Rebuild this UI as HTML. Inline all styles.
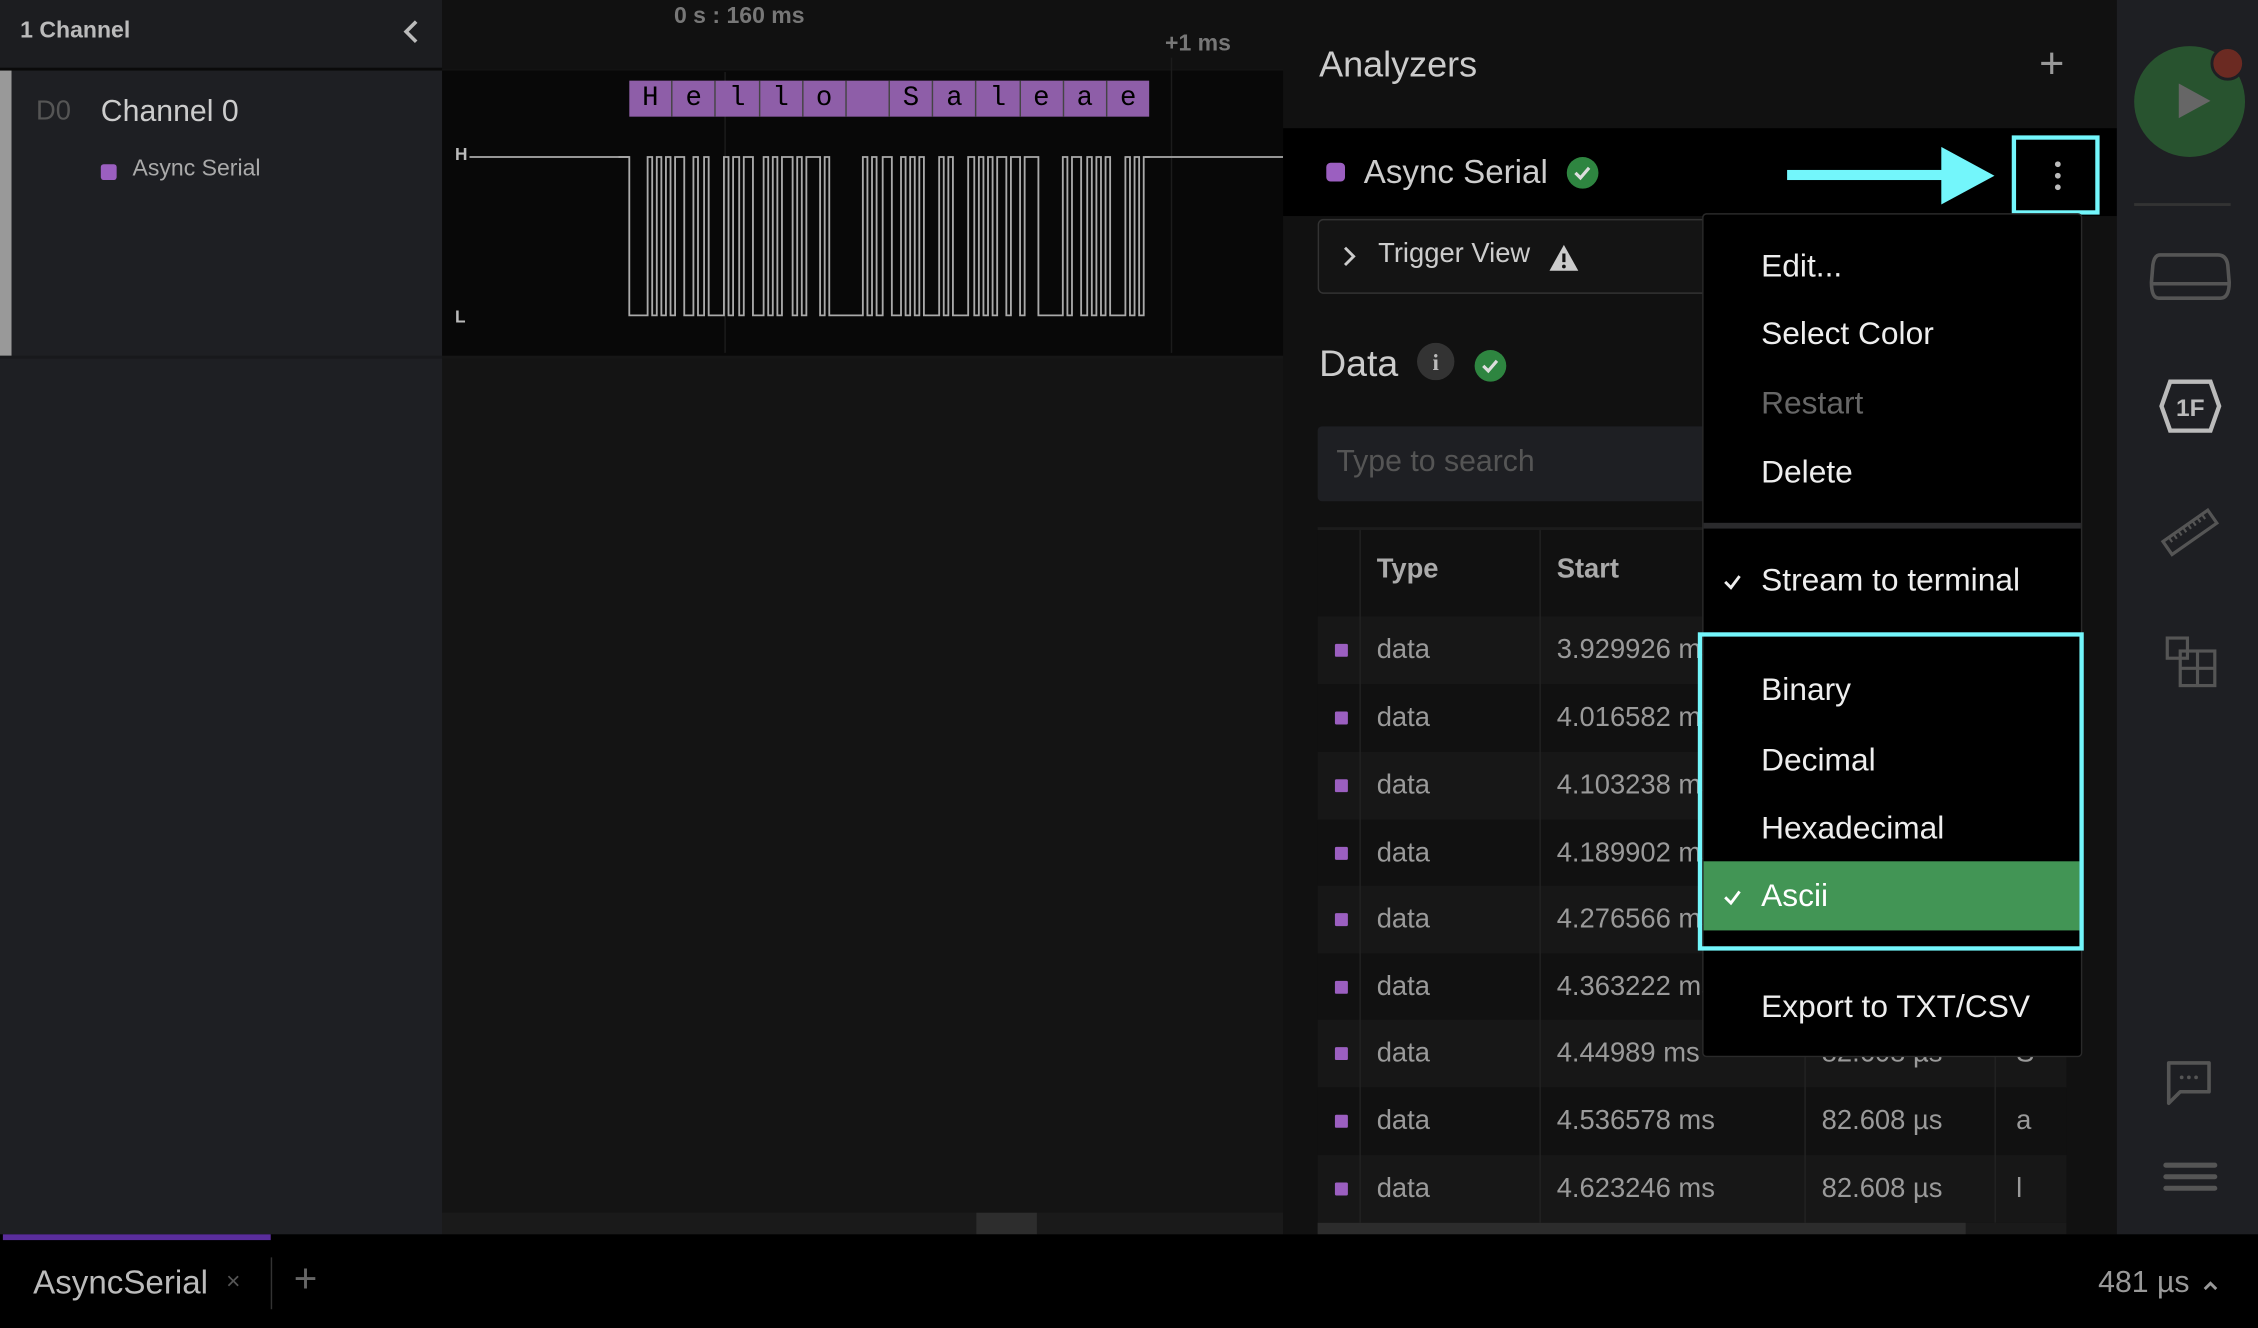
<!DOCTYPE html>
<html><head><meta charset="utf-8">
<style>
*{margin:0;padding:0;box-sizing:border-box}
html,body{width:2258px;height:1328px;overflow:hidden;background:#000}
body{font-family:"Liberation Sans",sans-serif}
#r{position:absolute;left:0;top:0;width:1568px;height:922px;transform:scale(1.44005,1.4403);transform-origin:0 0;background:#141414;overflow:hidden}
.a{position:absolute}
.t{position:absolute;white-space:nowrap}
.row{position:absolute;left:915px;width:520px;height:47px}
.row .m{position:absolute;left:12px;top:19px;width:9px;height:9px;background:#9b5fc0;border-radius:1px}
.row .c{position:absolute;top:13px;font-size:19px;color:#9a9a9a}
.vl{position:absolute;width:1px;background:#222}
.mi{position:absolute;left:1223px;font-size:22px;color:#eee}
</style></head><body><div id="r">
<div class="a" style="left:0;top:0;width:307px;height:48px;background:#1c1d20"></div>
<div class="t" style="left:14px;top:13px;font-size:16px;color:#bbb;font-weight:bold">1 Channel</div>
<svg class="a" style="left:276px;top:12px" width="18" height="20"><path d="M13 3 L6 10 L13 17" stroke="#bbb" stroke-width="2.5" fill="none"/></svg>
<div class="a" style="left:0;top:47px;width:307px;height:2px;background:#0a0a0a"></div>
<div class="a" style="left:0;top:49px;width:307px;height:808px;background:#1e1f23"></div>
<div class="a" style="left:0;top:49px;width:8px;height:198px;background:#999"></div>
<div class="a" style="left:0;top:247px;width:307px;height:2px;background:#18191c"></div>
<div class="t" style="left:25px;top:67px;font-size:19px;color:#555">D0</div>
<div class="t" style="left:70px;top:66px;font-size:21px;color:#ccc">Channel 0</div>
<div class="a" style="left:70px;top:114px;width:11px;height:11px;background:#9b5fc0;border-radius:2px"></div>
<div class="t" style="left:92px;top:109px;font-size:16px;color:#aaa">Async Serial</div>
<div class="a" style="left:307px;top:0;width:584px;height:48px;background:#111"></div>
<div class="t" style="left:468px;top:3px;font-size:16px;color:#777;font-weight:bold">0 s : 160 ms</div>
<div class="t" style="left:809px;top:22px;font-size:16px;color:#777;font-weight:bold">+1 ms</div>
<div class="a" style="left:307px;top:49px;width:584px;height:198px;background:#080808"></div>
<div class="a" style="left:503px;top:50px;width:1px;height:195px;background:#1c1c1c"></div>
<div class="a" style="left:813px;top:40px;width:1px;height:205px;background:#1c1c1c"></div>
<div class="a" style="left:307px;top:247px;width:584px;height:2px;background:#161616"></div>
<div class="a" style="left:437px;top:56px;width:361px;height:25px;background:#8e5ea8;display:flex">
<span style="flex:1;border-right:1px solid #444;text-align:center;font-family:'Liberation Mono',monospace;font-size:19px;line-height:25px;color:#000">H</span><span style="flex:1;border-right:1px solid #444;text-align:center;font-family:'Liberation Mono';font-size:19px;line-height:25px;color:#000">e</span><span style="flex:1;border-right:1px solid #444;text-align:center;font-family:'Liberation Mono';font-size:19px;line-height:25px;color:#000">l</span><span style="flex:1;border-right:1px solid #444;text-align:center;font-family:'Liberation Mono';font-size:19px;line-height:25px;color:#000">l</span><span style="flex:1;border-right:1px solid #444;text-align:center;font-family:'Liberation Mono';font-size:19px;line-height:25px;color:#000">o</span><span style="flex:1;border-right:1px solid #444"></span><span style="flex:1;border-right:1px solid #444;text-align:center;font-family:'Liberation Mono';font-size:19px;line-height:25px;color:#000">S</span><span style="flex:1;border-right:1px solid #444;text-align:center;font-family:'Liberation Mono';font-size:19px;line-height:25px;color:#000">a</span><span style="flex:1;border-right:1px solid #444;text-align:center;font-family:'Liberation Mono';font-size:19px;line-height:25px;color:#000">l</span><span style="flex:1;border-right:1px solid #444;text-align:center;font-family:'Liberation Mono';font-size:19px;line-height:25px;color:#000">e</span><span style="flex:1;border-right:1px solid #444;text-align:center;font-family:'Liberation Mono';font-size:19px;line-height:25px;color:#000">a</span><span style="flex:1;text-align:center;font-family:'Liberation Mono';font-size:19px;line-height:25px;color:#000">e</span></div>
<div class="t" style="left:316px;top:100px;font-size:12px;color:#bbb;font-weight:bold">H</div>
<div class="t" style="left:316px;top:213px;font-size:12px;color:#bbb;font-weight:bold">L</div>
<svg class="a" style="left:0;top:0" width="891" height="247"><path d="M326 109 H437 M795 109 H891" stroke="#aaa" stroke-width="1.2"/><path transform="translate(437,0) scale(1.06,1) translate(-437,0)" d="M430 109 H437 V219 h12 V109 h3 V219 h3 V109 h3 V219 h3 V109 h3 V219 h3 V109 h6 V219 h6 V109 h3 V219 h4 V109 h3 V219 h10 V109 h3 V219 h3 V109 h4 V219 h3 V109 h6 V219 h7 V109 h3 V219 h3 V109 h3 V219 h3 V109 h7 V219 h3 V109 h3 V219 h3 V109 h9 V219 h3 V109 h3 V219 h22 V109 h3 V219 h3 V109 h3 V219 h4 V109 h6 V219 h6 V109 h3 V219 h3 V109 h3 V219 h3 V109 h3 V219 h10 V109 h3 V219 h3 V109 h3 V219 h10 V109 h4 V219 h3 V109 h3 V219 h3 V109 h3 V219 h3 V109 h6 V219 h3 V109 h6 V219 h3 V109 h9 V219 h16 V109 h3 V219 h3 V109 h6 V219 h4 V109 h3 V219 h3 V109 h3 V219 h3 V109 h3 V219 h10 V109 h3 V219 h3 V109 h3 V219 h3 V109 h4" stroke="#aaa" stroke-width="1.2" fill="none"/></svg>
<div class="a" style="left:307px;top:842px;width:584px;height:15px;background:#1a1a1a"></div>
<div class="a" style="left:678px;top:842px;width:42px;height:15px;background:#2d2d2d"></div>
<div class="a" style="left:891px;top:0;width:579px;height:857px;background:#111"></div>
<div class="t" style="left:916px;top:31px;font-size:25px;color:#ccc">Analyzers</div>
<div class="t" style="left:1416px;top:28px;font-size:30px;color:#999;font-weight:300">+</div>
<div class="a" style="left:891px;top:89px;width:579px;height:61px;background:#000"></div>
<div class="a" style="left:921px;top:113px;width:13px;height:13px;background:#9b5fc0;border-radius:3px"></div>
<div class="t" style="left:947px;top:106px;font-size:23px;color:#ccc">Async Serial</div>
<svg class="a" style="left:1087px;top:108px" width="24" height="24"><circle cx="12" cy="12" r="11" fill="#2e8540"/><path d="M7 12 L10.5 15.5 L16.5 8.5" stroke="#ddd" stroke-width="2.2" fill="none"/></svg>
<div class="a" style="left:1241px;top:118px;width:120px;height:7px;background:#73f6fb"></div>
<svg class="a" style="left:1348px;top:102px" width="38" height="40"><path d="M0 0 L37 20 L0 40Z" fill="#73f6fb"/></svg>
<div class="a" style="left:1397px;top:94px;width:61px;height:55px;border:3px solid #73f6fb"></div>
<svg class="a" style="left:1424px;top:110px" width="10" height="24"><circle cx="5" cy="4" r="2" fill="#bbb"/><circle cx="5" cy="12" r="2" fill="#bbb"/><circle cx="5" cy="20" r="2" fill="#bbb"/></svg>
<div class="a" style="left:915px;top:152px;width:280px;height:52px;border:1px solid #333;border-radius:4px;background:#141414"></div>
<svg class="a" style="left:930px;top:170px" width="14" height="16"><path d="M4 2 L10 8 L4 14" stroke="#ccc" stroke-width="2" fill="none"/></svg>
<div class="t" style="left:957px;top:166px;font-size:19px;color:#ccc">Trigger View</div>
<svg class="a" style="left:1075px;top:169px" width="22" height="20"><path d="M11 1 L21 19 H1Z" fill="#ccc"/><path d="M11 7 V13" stroke="#111" stroke-width="2.2"/><circle cx="11" cy="16" r="1.3" fill="#111"/></svg>
<div class="t" style="left:916px;top:237px;font-size:26px;color:#ccc">Data</div>
<svg class="a" style="left:984px;top:238px" width="26" height="26"><circle cx="13" cy="13" r="13" fill="#333"/><text x="13" y="19" text-anchor="middle" font-family="Liberation Serif" font-weight="bold" font-size="16" fill="#bbb">i</text></svg>
<svg class="a" style="left:1023px;top:242px" width="24" height="24"><circle cx="12" cy="12" r="11" fill="#2e8540"/><path d="M7 12 L10.5 15.5 L16.5 8.5" stroke="#ddd" stroke-width="2.2" fill="none"/></svg>
<div class="a" style="left:915px;top:296px;width:280px;height:52px;background:#1e1f23;border-radius:3px"></div>
<div class="t" style="left:928px;top:309px;font-size:21px;color:#555">Type to search</div>
<div class="a" style="left:915px;top:366px;width:520px;height:2px;background:#1c1c1c"></div>
<div class="a" style="left:915px;top:368px;width:520px;height:60px;background:#111"></div>
<div class="t" style="left:956px;top:385px;font-size:19px;color:#aaa;font-weight:bold">Type</div>
<div class="t" style="left:1081px;top:385px;font-size:19px;color:#aaa;font-weight:bold">Start</div>
<div class="row" style="top:428px;background:#171717"><div class="m"></div><div class="c" style="left:41px">data</div><div class="c" style="left:166px">3.929926 ms</div><div class="c" style="left:350px">82.608 µs</div><div class="c" style="left:485px">H</div></div>
<div class="row" style="top:475px;background:#111"><div class="m"></div><div class="c" style="left:41px">data</div><div class="c" style="left:166px">4.016582 ms</div><div class="c" style="left:350px">82.608 µs</div><div class="c" style="left:485px">e</div></div>
<div class="row" style="top:522px;background:#171717"><div class="m"></div><div class="c" style="left:41px">data</div><div class="c" style="left:166px">4.103238 ms</div><div class="c" style="left:350px">82.608 µs</div><div class="c" style="left:485px">l</div></div>
<div class="row" style="top:569px;background:#111"><div class="m"></div><div class="c" style="left:41px">data</div><div class="c" style="left:166px">4.189902 ms</div><div class="c" style="left:350px">82.608 µs</div><div class="c" style="left:485px">l</div></div>
<div class="row" style="top:615px;background:#171717"><div class="m"></div><div class="c" style="left:41px">data</div><div class="c" style="left:166px">4.276566 ms</div><div class="c" style="left:350px">82.608 µs</div><div class="c" style="left:485px">o</div></div>
<div class="row" style="top:662px;background:#111"><div class="m"></div><div class="c" style="left:41px">data</div><div class="c" style="left:166px">4.363222 ms</div><div class="c" style="left:350px">82.608 µs</div><div class="c" style="left:485px"></div></div>
<div class="row" style="top:708px;background:#171717"><div class="m"></div><div class="c" style="left:41px">data</div><div class="c" style="left:166px">4.44989 ms</div><div class="c" style="left:350px">82.608 µs</div><div class="c" style="left:485px">S</div></div>
<div class="row" style="top:755px;background:#111"><div class="m"></div><div class="c" style="left:41px">data</div><div class="c" style="left:166px">4.536578 ms</div><div class="c" style="left:350px">82.608 µs</div><div class="c" style="left:485px">a</div></div>
<div class="row" style="top:802px;background:#171717"><div class="m"></div><div class="c" style="left:41px">data</div><div class="c" style="left:166px">4.623246 ms</div><div class="c" style="left:350px">82.608 µs</div><div class="c" style="left:485px">l</div></div>
<div class="vl" style="left:944px;top:368px;height:481px"></div>
<div class="vl" style="left:1069px;top:368px;height:481px"></div>
<div class="vl" style="left:1253px;top:368px;height:481px"></div>
<div class="vl" style="left:1385px;top:368px;height:481px"></div>
<div class="a" style="left:915px;top:849px;width:520px;height:8px;background:#1a1a1a"></div>
<div class="a" style="left:915px;top:849px;width:450px;height:8px;background:#2c2c2c"></div>
<div class="a" style="left:1182px;top:148px;width:264px;height:586px;background:#000;border:1px solid #2a2a2a;border-radius:3px"></div>
<div class="mi" style="top:172px">Edit...</div>
<div class="mi" style="top:219px">Select Color</div>
<div class="mi" style="top:267px;color:#666">Restart</div>
<div class="mi" style="top:315px">Delete</div>
<div class="a" style="left:1183px;top:363px;width:262px;height:4px;background:#2a2a2c"></div>
<svg class="a" style="left:1196px;top:397px" width="14" height="14"><path d="M2 7 L6 11 L12 3" stroke="#eee" stroke-width="2" fill="none"/></svg>
<div class="mi" style="top:390px">Stream to terminal</div>
<div class="a" style="left:1183px;top:598px;width:261px;height:48px;background:#429555"></div>
<div class="a" style="left:1179px;top:439px;width:268px;height:221px;border:3px solid #73f6fb"></div>
<div class="mi" style="top:466px">Binary</div>
<div class="mi" style="top:515px">Decimal</div>
<div class="mi" style="top:562px">Hexadecimal</div>
<svg class="a" style="left:1196px;top:616px" width="14" height="14"><path d="M2 7 L6 11 L12 3" stroke="#fff" stroke-width="2" fill="none"/></svg>
<div class="mi" style="top:609px;color:#fff">Ascii</div>
<div class="mi" style="top:686px">Export to TXT/CSV</div>
<div class="a" style="left:1470px;top:0;width:98px;height:857px;background:#1e1f23"></div>
<div class="a" style="left:1482px;top:32px;width:77px;height:77px;border-radius:50%;background:#28532f"></div>
<svg class="a" style="left:1510px;top:56px" width="28" height="28"><path d="M3 2 L25 14 L3 26Z" fill="#666"/></svg>
<div class="a" style="left:1535px;top:32px;width:24px;height:24px;border-radius:50%;background:#6b2a22;border:2px solid #1e1f23"></div>
<div class="a" style="left:1482px;top:141px;width:67px;height:2px;background:#333"></div>
<svg class="a" style="left:1490px;top:170px" width="62" height="44"><path d="M10 7 H50 Q56 7 57 14 L58 26 Q58 37 52 37 H9 Q4 37 4 26 L5 14 Q6 7 10 7Z M5 27 H57" stroke="#555" stroke-width="2.5" fill="none"/></svg>
<svg class="a" style="left:1498px;top:262px" width="46" height="40"><path d="M9 3 H37 L43 20 L37 37 H9 L3 20Z" stroke="#bbb" stroke-width="3" fill="none"/><text x="23" y="27" text-anchor="middle" font-family="Liberation Sans" font-weight="bold" font-size="17" fill="#bbb">1F</text></svg>
<svg class="a" style="left:1500px;top:350px" width="42" height="40"><g transform="rotate(-35 21 20)"><rect x="2" y="14" width="38" height="11" fill="none" stroke="#555" stroke-width="2.2"/><path d="M7 14v4M11 14v4M15 14v4M19 14v4M23 14v4M27 14v4M31 14v4M35 14v4" stroke="#555" stroke-width="1.5"/></g></svg>
<svg class="a" style="left:1502px;top:440px" width="40" height="40"><rect x="3" y="3" width="14" height="14" fill="none" stroke="#555" stroke-width="2.2"/><rect x="12" y="12" width="24" height="24" fill="none" stroke="#555" stroke-width="2.2"/><path d="M24 12 V36 M12 24 H36" stroke="#555" stroke-width="2.2"/></svg>
<svg class="a" style="left:1502px;top:734px" width="38" height="36"><path d="M4 4 H32 V24 H12 L4 32Z" stroke="#555" stroke-width="2.5" fill="none" stroke-linejoin="round"/><circle cx="13" cy="14" r="1.3" fill="#555"/><circle cx="18" cy="14" r="1.3" fill="#555"/><circle cx="23" cy="14" r="1.3" fill="#555"/></svg>
<svg class="a" style="left:1502px;top:805px" width="38" height="26"><path d="M2 4 H36 M2 12 H36 M2 20 H36" stroke="#555" stroke-width="3.5" stroke-linecap="round"/></svg>
<div class="a" style="left:0;top:857px;width:1568px;height:65px;background:#000"></div>
<div class="a" style="left:2px;top:857px;width:186px;height:4px;background:#5a2d9c"></div>
<div class="t" style="left:23px;top:877px;font-size:23px;color:#bbb">AsyncSerial</div>
<div class="t" style="left:157px;top:880px;font-size:17px;color:#555">×</div>
<div class="a" style="left:188px;top:873px;width:1px;height:36px;background:#333"></div>
<div class="t" style="left:204px;top:872px;font-size:28px;color:#666">+</div>
<div class="t" style="left:1457px;top:879px;font-size:21px;color:#999">481 µs</div>
<svg class="a" style="left:1528px;top:886px" width="14" height="12"><path d="M3 9 L7 5 L11 9" stroke="#999" stroke-width="2" fill="none"/></svg>
</div></body></html>
